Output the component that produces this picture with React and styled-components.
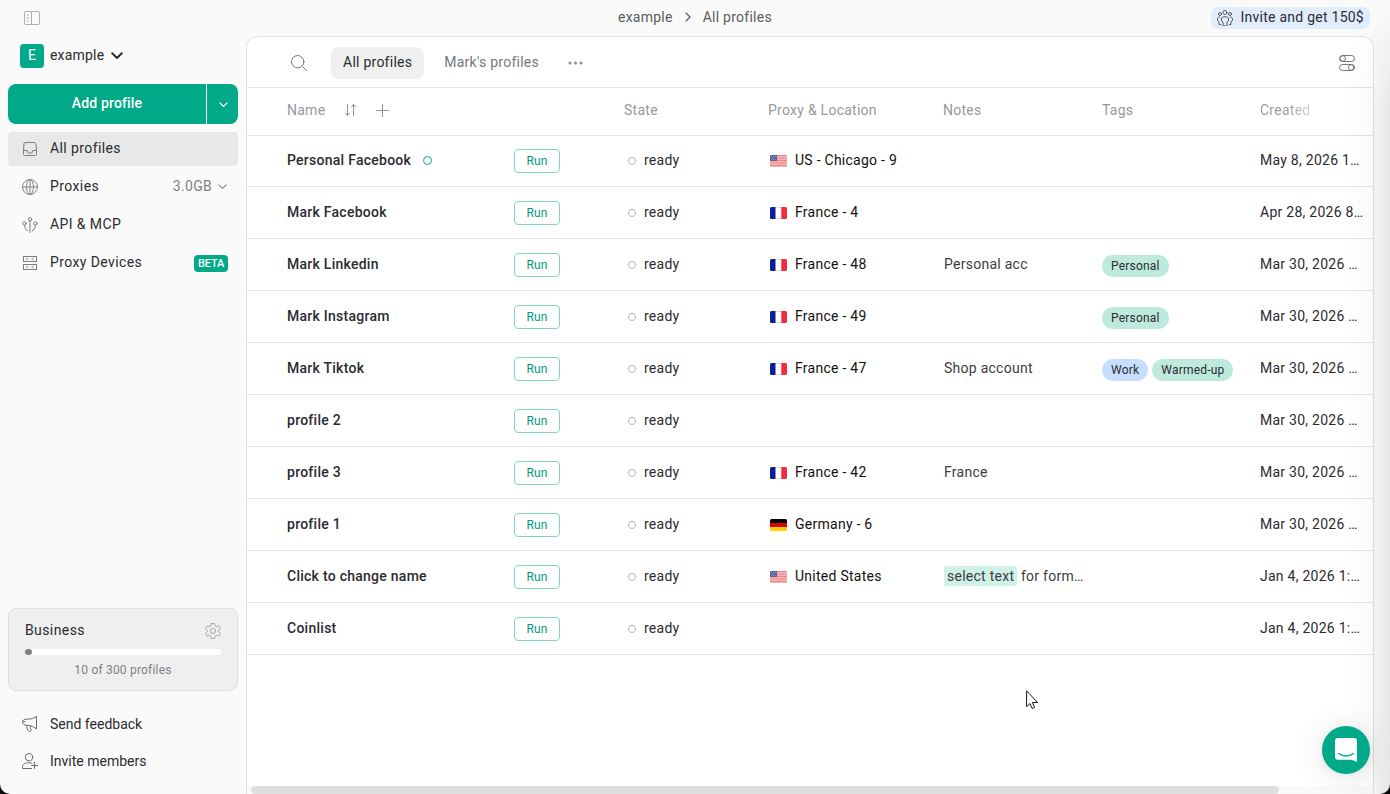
import React from "react";
import styled, { createGlobalStyle } from "styled-components";

const profiles = [
  { name: "Personal Facebook", pinned: true, flag: "us", proxy: "US - Chicago - 9", created: "May 8, 2026 1..." },
  { name: "Mark Facebook", flag: "fr", proxy: "France - 4", created: "Apr 28, 2026 8..." },
  { name: "Mark Linkedin", flag: "fr", proxy: "France - 48", notes: "Personal acc", tags: ["Personal"], created: "Mar 30, 2026 ..." },
  { name: "Mark Instagram", flag: "fr", proxy: "France - 49", tags: ["Personal"], created: "Mar 30, 2026 ..." },
  { name: "Mark Tiktok", flag: "fr", proxy: "France - 47", notes: "Shop account", tags: ["Work", "Warmed-up"], created: "Mar 30, 2026 ..." },
  { name: "profile 2", created: "Mar 30, 2026 ..." },
  { name: "profile 3", flag: "fr", proxy: "France - 42", notes: "France", created: "Mar 30, 2026 ..." },
  { name: "profile 1", flag: "de", proxy: "Germany - 6", created: "Mar 30, 2026 ..." },
  { name: "Click to change name", flag: "us", proxy: "United States", highlight: "select text", notes: " for form...", created: "Jan 4, 2026 1:..." },
  { name: "Coinlist", created: "Jan 4, 2026 1:..." },
];

// "..." is stored in data, shown as a real ellipsis
const short = (text) => text.replace("...", "…");

const Svg = ({ w = 16, h = w, box, children, ...rest }) => (
  <svg width={w} height={h} viewBox={box || `0 0 ${w} ${h}`} fill="none" stroke="currentColor" strokeLinecap="round" strokeLinejoin="round" {...rest}>
    {children}
  </svg>
);

const SidebarIcon = () => (
  <Svg w={16} h={14}>
    <rect x=".5" y=".5" width="15" height="13" rx="1.5" />
    <path d="M7.5.5v13" />
    <path d="M3 4h1.6M3 7h1.6M3 10h1.6" />
  </Svg>
);

const Chevron = ({ w = 10, thick = 1.2 }) => (
  <Svg w={w} h={w * 0.6} box="0 0 10 6" strokeWidth={thick}>
    <path d="M1 1l4 4 4-4" />
  </Svg>
);

const InboxIcon = () => (
  <Svg>
    <path d="M3.500 1.500h9l1.500 1 .5 7v4a1 1 0 0 1-1 1h-11a1 1 0 0 1-1-1v-4l.5-7z" />
    <path d="M1.500 9.500h3.700l1 2.500h3.600l1-2.500h3.700" />
  </Svg>
);

const GlobeIcon = () => (
  <Svg strokeWidth=".95">
    <circle cx="8" cy="8" r="7.500" />
    <ellipse cx="8" cy="8" rx="3.500" ry="7.500" />
    <path d="M8 .5v15M.5 8h15" />
  </Svg>
);

const ApiIcon = () => (
  <Svg>
    <circle cx="8" cy="2.300" r="1.700" />
    <circle cx="2.500" cy="6.500" r="1.700" />
    <circle cx="13.500" cy="6.500" r="1.700" />
    <path d="M8 4v11.500M2.700 8.200c0 3 1 4.800 3 5.500M13.300 8.200c0 3-1 4.800-3 5.500" />
  </Svg>
);

const ServersIcon = () => (
  <Svg strokeLinejoin="miter">
    <rect x="1.500" y="1.500" width="13" height="5" />
    <rect x="1.500" y="9.500" width="13" height="5" />
    <path d="M4.500 4h1.500M10 4h1.500M4.500 12h1.500M10 12h1.500" />
  </Svg>
);

const GearIcon = () => (
  <Svg strokeWidth=".95">
    <circle cx="8" cy="8" r="2.600" />
    <path d="M6.400.5h3.200l.5 2.300 1.500.9 2.300-.8 1.600 2.800-1.800 1.500v1.600l1.800 1.500-1.600 2.800-2.300-.8-1.500.9-.5 2.300H6.400l-.5-2.300-1.500-.9-2.300.8L.5 10.300l1.800-1.500V7.200L.5 5.700l1.600-2.800 2.300.8 1.500-.9z" />
  </Svg>
);

const MegaphoneIcon = () => (
  <Svg>
    <path d="M14.500.5v12.500C12.500 11.200 9 9.400 4.500 9.200 2 9 .5 7.900.5 6.100S2 3.200 4.500 3.200C9 3.200 12.500 2.300 14.500.5zM.7 5.700h2.500M4.600 9.300c.1 2.900 1 5.100 2.400 6.100 1.200.4 2.300-.3 2.300-1.600-.9-.8-1.200-2.100-1.100-3.700" />
  </Svg>
);

const InviteIcon = () => (
  <Svg>
    <circle cx="7" cy="4.200" r="3.700" />
    <path d="M9.500 15.500H.5v-2c0-2.400 2.800-3.700 6.300-3.700 1.200 0 2.200.1 3.200.4M12.500 9.500v6M9.500 12.500h6" />
  </Svg>
);

const PeopleIcon = () => (
  <Svg>
    <circle cx="8" cy="2.500" r="2" />
    <circle cx="3" cy="4" r="1.500" />
    <circle cx="13" cy="4" r="1.500" />
    <path d="M6 15.500v-3.500l-1.500-1V9C4.500 7.500 5.500 6.700 8 6.700s3.500.8 3.500 2.300v2l-1.500 1v3.500zM3.700 14.500H2V11.500l-1.500-1V9c0-1.200.8-2 2.200-2M12.300 14.500H14V11.500l1.500-1V9c0-1.200-.8-2-2.200-2" />
  </Svg>
);

const SearchIcon = () => (
  <Svg>
    <circle cx="6.700" cy="6.700" r="6.200" />
    <path d="M12 12l3.600 3.600" />
  </Svg>
);

const DotsIcon = () => (
  <Svg w={15} h={4} fill="currentColor" stroke="none">
    <circle cx="2" cy="2" r="1.500" />
    <circle cx="7.500" cy="2" r="1.500" />
    <circle cx="13" cy="2" r="1.500" />
  </Svg>
);

const TogglesIcon = () => (
  <Svg>
    <rect x=".5" y=".5" width="15" height="6" rx="3" />
    <circle cx="3.800" cy="3.500" r="2.800" />
    <rect x=".5" y="9.500" width="15" height="6" rx="3" />
    <circle cx="12.200" cy="12.500" r="2.800" />
  </Svg>
);

const SortIcon = () => (
  <Svg w={11} h={12}>
    <path d="M2.500 .5v11M.5 9.200l2 2.300 2-2.300M8.500 11.500V.5M6.500 2.800l2-2.300 2 2.300" />
  </Svg>
);

const PlusIcon = () => (
  <Svg w={13}>
    <path d="M6.500 .5v12M.5 6.500h12" />
  </Svg>
);

const flags = {
  us: (
    <>
      <rect width="17" height="12" fill="#f9b9b9" />
      <path d="M0 .5h17M0 3h17M0 5.500h17M0 8h17M0 10.500h17" stroke="#f08080" strokeWidth="1.200" />
      <rect width="7" height="6" fill="#5360a0" />
      <path d="M1 1.500h5M1 4.500h5M2 3h4" stroke="#a9b1d3" strokeWidth=".6" strokeDasharray="1 1" />
    </>
  ),
  fr: (
    <>
      <rect width="17" height="12" fill="#fff" />
      <path d="M5 .5h7M5 11.500h7" stroke="#ddd" />
      <rect width="5.500" height="12" fill="#0a1f99" />
      <rect x="11.300" width="5.700" height="12" fill="#f22c3c" />
    </>
  ),
  de: (
    <>
      <rect width="17" height="4" fill="#000" />
      <rect y="4" width="17" height="4" fill="#de0000" />
      <rect y="8" width="17" height="4" fill="#ffcf00" />
    </>
  ),
};

function ProfileRow({ profile, first }) {
  return (
    <Row $first={first}>
      <Name>
        {profile.name}
        {profile.pinned && <Circle $color="#00a987" $size={9} />}
      </Name>
      <RunButton>Run</RunButton>
      <State>
        <Circle $color="#b4b4b6" />
        ready
      </State>
      <Proxy>
        {profile.flag && (
          <>
            <Flag viewBox="0 0 17 12">{flags[profile.flag]}</Flag>
            {profile.proxy}
          </>
        )}
      </Proxy>
      <Notes>
        {profile.highlight && <Mark>{profile.highlight}</Mark>}
        {profile.notes && short(profile.notes)}
      </Notes>
      <Tags>
        {(profile.tags || []).map((tag) => (
          <Tag key={tag} $blue={tag === "Work"}>{tag}</Tag>
        ))}
      </Tags>
      <Created>{short(profile.created)}</Created>
    </Row>
  );
}

function Sidebar() {
  return (
    <SideWrapper>
      <Collapse><SidebarIcon /></Collapse>
      <Workspace>
        <Avatar>E</Avatar>
        <span>example</span>
        <Chevron w={12} thick={1.6} />
      </Workspace>
      <AddGroup>
        <AddButton>Add profile</AddButton>
        <AddMore><Chevron w={9} thick={1.3} /></AddMore>
      </AddGroup>
      <Nav>
        <NavItem $active><InboxIcon />All profiles</NavItem>
        <NavItem><GlobeIcon />Proxies<Traffic>3.0GB<Chevron w={9} /></Traffic></NavItem>
        <NavItem><ApiIcon />API &amp; MCP</NavItem>
        <NavItem><ServersIcon />Proxy Devices<Beta>BETA</Beta></NavItem>
      </Nav>
      <Plan>
        <PlanHead>Business<GearIcon /></PlanHead>
        <Bar><Fill /></Bar>
        <PlanText>10 of 300 profiles</PlanText>
      </Plan>
      <BottomItem><MegaphoneIcon />Send feedback</BottomItem>
      <BottomItem><InviteIcon />Invite members</BottomItem>
    </SideWrapper>
  );
}

function App() {
  return (
    <Window>
      <GlobalStyle />
      <Page>
        <Sidebar />
        <Content>
          <TopBar>
            <Breadcrumbs>
              example
              <Svg w={6} h={10} strokeWidth="1.200"><path d="M1 1l4 4-4 4" /></Svg>
              All profiles
            </Breadcrumbs>
            <InviteLink><PeopleIcon />Invite and get 150$</InviteLink>
          </TopBar>
          <Panel>
            <Toolbar>
              <SearchIcon />
              <Tab $active>All profiles</Tab>
              <Tab>Mark's profiles</Tab>
              <DotsIcon />
              <Settings><TogglesIcon /></Settings>
            </Toolbar>
            <HeaderRow>
              <NameHeader>Name<SortIcon /><PlusIcon /></NameHeader>
              <span />
              <span>State</span>
              <span>Proxy &amp; Location</span>
              <span>Notes</span>
              <span>Tags</span>
              <FadedHeader>Created</FadedHeader>
            </HeaderRow>
            {profiles.map((profile, i) => (
              <ProfileRow key={profile.name} profile={profile} first={i === 0} />
            ))}
            <Scroll><Thumb /></Scroll>
          </Panel>
        </Content>
        <EdgeShade />
        <Chat>
          <svg width="22" height="24" viewBox="0 0 22 24">
            <path d="M3 0h16a3 3 0 0 1 3 3v21l-5.500-2.200H3a3 3 0 0 1-3-3V3a3 3 0 0 1 3-3z" fill="#fff" />
            <path d="M3.700 15.500c4 3.300 10.600 3.300 14.600 0" fill="none" stroke="#00a987" strokeWidth="1.300" strokeLinecap="round" />
          </svg>
        </Chat>
        <Cursor viewBox="0 0 13 20">
          <path d="M.6.800v15.800l3.400-3.100L6.200 18.500l2.400-1-2.200-5h5.200z" fill="#fff" stroke="#15151f" strokeWidth="1" />
        </Cursor>
      </Page>
    </Window>
  );
}

const GlobalStyle = createGlobalStyle`
  * { box-sizing: border-box; }
  body {
    margin: 0;
    overflow: hidden;
    font-family: Roboto, sans-serif;
    font-size: 14px;
    line-height: 20px;
    letter-spacing: 0.4px;
    color: #2b2b31;
  }
  button { font: inherit; letter-spacing: inherit; padding: 0; cursor: pointer; }
  svg { flex: none; display: block; }
`;

const Window = styled.div`
  background: #08080c;
`;

const Page = styled.div`
  position: relative;
  display: flex;
  width: 1390px;
  height: 794px;
  background: #fafafa;
  border-radius: 0 0 10px 10px;
  overflow: hidden;
`;

const SideWrapper = styled.aside`
  display: flex;
  flex-direction: column;
  width: 246px;
  padding: 0 8px;
`;

const Collapse = styled.div`
  height: 43px;
  padding: 11px 0 0 16px;
  color: #b0b0b3;
`;

const Workspace = styled.div`
  display: flex;
  align-items: center;
  height: 25px;
  padding-left: 12px;
  gap: 6px;
  letter-spacing: 0.2px;

  span { padding-bottom: 1px; }
  svg { margin: 1px 0 0 1px; }
`;

const Avatar = styled.div`
  width: 24px;
  height: 24px;
  border-radius: 4px;
  background: #00a987;
  color: white;
  line-height: 23px;
  text-align: center;
`;

const AddGroup = styled.div`
  display: flex;
  gap: 1px;
  height: 40px;
  margin: 16px 0 10px;
  width: 230px;
`;

const AddButton = styled.button`
  width: 198px;
  padding-bottom: 2px;
  border: none;
  border-radius: 8px 0 0 8px;
  background: #00a987;
  color: white;
  font-weight: 500;
  letter-spacing: 0.15px;
`;

const AddMore = styled.button`
  display: flex;
  align-items: center;
  justify-content: center;
  flex: 1;
  padding: 1px 0 0 1px;
  border: none;
  border-radius: 0 8px 8px 0;
  background: #00a987;
  color: white;
`;

const Nav = styled.nav`
  flex: 1;
  margin-top: -2px;
`;

const NavItem = styled.div`
  display: flex;
  align-items: center;
  gap: 12px;
  height: 34px;
  margin-bottom: 4px;
  padding: 0 10px 2px 14px;
  border-radius: 4px;
  background: ${props => props.$active ? "#e8e8e8" : "transparent"};

  > svg { color: #7d7d80; margin-top: 2px; }
`;

const Traffic = styled.div`
  display: flex;
  align-items: center;
  gap: 6px;
  margin-left: auto;
  padding-right: 1px;
  color: #808084;
  letter-spacing: 0.3px;

  svg { margin-top: 1px; }
`;

const Beta = styled.div`
  margin: 3px 0 0 auto;
  padding: 0 4px;
  border-radius: 4px;
  background: #00a987;
  color: white;
  font-size: 11px;
  font-weight: 500;
  letter-spacing: -0.2px;
  line-height: 17px;
`;

const Plan = styled.div`
  height: 83px;
  margin-bottom: 14px;
  padding: 11px 16px;
  border: 1px solid #dfdfdf;
  border-radius: 8px;
  background: #efefef;
`;

const PlanHead = styled.div`
  display: flex;
  justify-content: space-between;
  align-items: center;

  svg { color: #a3a3a5; margin-top: 1px; }
`;

const Bar = styled.div`
  height: 6px;
  margin: 9px 0 5px;
  border-radius: 3px;
  background: white;
`;

const Fill = styled.div`
  width: 7px;
  height: 6px;
  border-radius: 3px;
  background: #808080;
`;

const PlanText = styled.div`
  color: #808084;
  font-size: 12px;
  letter-spacing: 0.2px;
  text-align: center;
`;

const BottomItem = styled.div`
  display: flex;
  align-items: center;
  gap: 12px;
  height: 37px;
  padding-left: 14px;
  letter-spacing: 0;

  &:last-child { margin-bottom: 15px; }
  svg { color: #6d6d70; }
`;

const Content = styled.main`
  display: flex;
  flex-direction: column;
  width: 1128px;
`;

const TopBar = styled.header`
  display: flex;
  justify-content: flex-end;
  height: 36px;
`;

const Breadcrumbs = styled.div`
  display: flex;
  align-items: center;
  gap: 12px;
  height: 34px;
  margin-right: auto;
  padding-left: 372px;
  color: #5c5c60;
  letter-spacing: 0.25px;
`;

const InviteLink = styled.div`
  display: flex;
  align-items: center;
  gap: 8px;
  height: 22px;
  margin: 7px 4px 0 0;
  padding: 0 6px 2px;
  border-radius: 7px;
  background: #e1edfd;
  letter-spacing: 0.25px;

  svg { color: #5c5c62; margin-top: 2px; }
`;

const Panel = styled.section`
  display: flex;
  flex-direction: column;
  flex: 1;
  border: 1px solid #e2e2e2;
  border-bottom: none;
  border-radius: 12px 12px 0 0;
  background: white;
`;

const Toolbar = styled.div`
  display: flex;
  align-items: center;
  height: 51px;
  padding: 1px 18px 0 44px;
  border-bottom: 1px solid #e3e3e3;
  color: #77777b;
  letter-spacing: 0.25px;

  > svg:first-child { margin-right: 24px; }
`;

const Tab = styled.div`
  height: 32px;
  margin-right: 8px;
  padding: 0 12px;
  border-radius: 8px;
  background: ${props => props.$active ? "#f0f0f0" : "transparent"};
  color: ${props => props.$active ? "#2b2b31" : "#77777b"};
  line-height: 31px;

  & + svg { margin-left: 9px; color: #8f8f99; }
`;

const Settings = styled.div`
  margin-left: auto;
`;

const Grid = styled.div`
  display: grid;
  grid-template-columns: 227px 110px 144px 175px 159px 158px 1fr;
  align-items: center;
  padding-left: 40px;
  border-bottom: 1px solid #e3e3e3;
  letter-spacing: 0.26px;
`;

const HeaderRow = styled(Grid)`
  height: 48px;
  padding-bottom: 3px;
  color: #98989d;
`;

const NameHeader = styled.div`
  display: flex;
  align-items: center;
  gap: 20px;

  svg { color: #909095; }
`;

const FadedHeader = styled.span`
  width: 51px;
  background: linear-gradient(90deg, #98989d 50%, #d4d4d6);
  background-clip: text;
  color: transparent;
`;

const Row = styled(Grid)`
  height: ${props => props.$first ? 51 : 52}px;
  padding-bottom: ${props => props.$first ? 2 : 1}px;
`;

const Name = styled.div`
  display: flex;
  align-items: center;
  gap: 12px;
  font-weight: 500;
`;

const Circle = styled.i`
  width: ${props => props.$size || 8}px;
  height: ${props => props.$size || 8}px;
  margin-top: 1px;
  border: 1px solid ${props => props.$color};
  border-radius: 50%;
`;

const RunButton = styled.button`
  width: 46px;
  height: 24px;
  margin-top: 1px;
  border: 1px solid #80d4c3;
  border-radius: 4px;
  background: white;
  color: #009b7a;
  font-size: 12px;
  letter-spacing: 0.1px;
`;

const State = styled.div`
  display: flex;
  align-items: center;
  gap: 8px;
  padding-left: 4px;
`;

const Proxy = styled.div`
  display: flex;
  align-items: center;
  gap: 8px;
  padding-left: 2px;
  color: #111;
`;

const Flag = styled.svg`
  width: 17px;
  height: 12px;
  margin-top: 1px;
  border-radius: 1.5px;
`;

const Notes = styled.div`
  padding-left: 1px;
  color: #3c3c42;
  white-space: pre;
`;

const Mark = styled.span`
  padding: 2px 3px;
  border-radius: 2px;
  background: #cff1e6;
`;

const Tags = styled.div`
  display: flex;
  gap: 4px;
  margin-top: 3px;
`;

const Tag = styled.span`
  padding: 0 9px;
  border-radius: 11px;
  background: ${props => props.$blue ? "#c7dffe" : "#beeadd"};
  font-size: 12px;
  letter-spacing: 0.2px;
  line-height: 22px;
`;

const Created = styled.div`
  white-space: nowrap;
`;

const Scroll = styled.div`
  height: 8px;
  margin-top: auto;
  padding-left: 4px;
  background: #fafafa;
`;

const Thumb = styled.div`
  width: 1028px;
  height: 8px;
  border-radius: 4px;
  background: #dedede;
`;

// soft shadow along the window edge
const EdgeShade = styled.div`
  position: absolute;
  top: 0;
  right: 0;
  bottom: 0;
  width: 46px;
  background: linear-gradient(90deg, transparent, rgba(0, 0, 0, 0.02) 60%, rgba(0, 0, 0, 0.075));
  mask-image: linear-gradient(transparent, #000 110px);
  pointer-events: none;
`;

const Chat = styled.button`
  position: absolute;
  right: 20px;
  bottom: 20px;
  display: flex;
  align-items: center;
  justify-content: center;
  width: 48px;
  height: 48px;
  border: none;
  border-radius: 50%;
  background: #00a987;
  box-shadow: 0 1px 6px rgba(0, 0, 0, 0.06), 0 2px 32px rgba(0, 0, 0, 0.12);
`;

const Cursor = styled.svg`
  position: absolute;
  left: 1026px;
  top: 690px;
  width: 13px;
  height: 20px;
`;

export default App;
